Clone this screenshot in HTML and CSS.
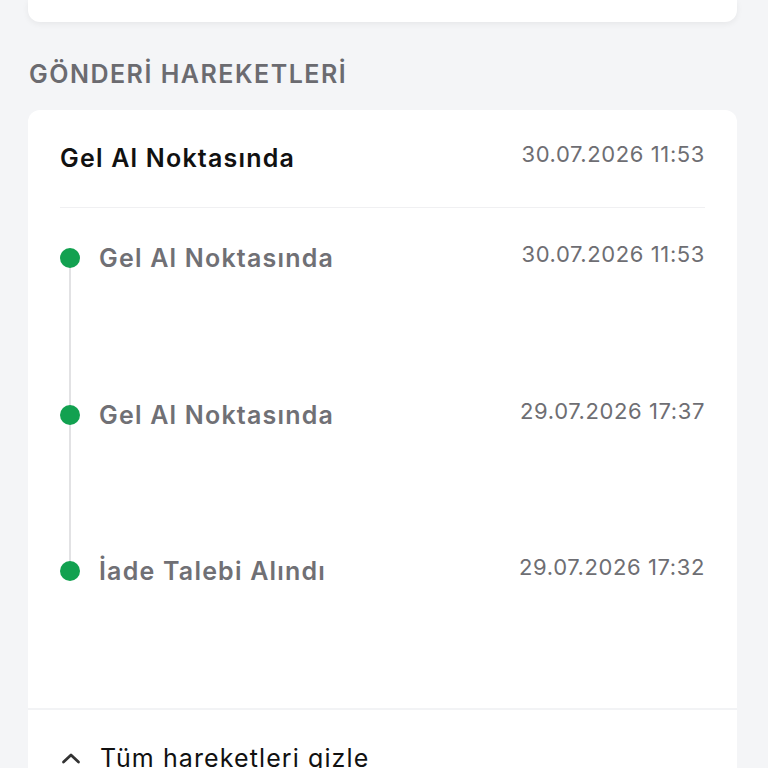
FILE: index.html
```html
<!DOCTYPE html>
<html lang="tr">
<head>
<meta charset="utf-8">
<link rel="stylesheet" href="styles.css">
</head>
<body>
<div class="page">
  <div class="card card-top"></div>
  <h2 class="section-title">GÖNDERİ HAREKETLERİ</h2>
  <div class="card card-moves">
    <div class="summary">
      <div class="summary-title">Gel Al Noktasında</div>
      <div class="date">30.07.2026 11:53</div>
    </div>
    <div class="timeline">
      <div class="item">
        <span class="dot"></span>
        <div class="item-title">Gel Al Noktasında</div>
        <div class="date">30.07.2026 11:53</div>
      </div>
      <div class="item">
        <span class="dot"></span>
        <div class="item-title">Gel Al Noktasında</div>
        <div class="date">29.07.2026 17:37</div>
      </div>
      <div class="item last">
        <span class="dot"></span>
        <div class="item-title">İade Talebi Alındı</div>
        <div class="date">29.07.2026 17:32</div>
      </div>
    </div>
    <div class="toggle">
      <svg class="chev" width="20" height="12" viewBox="0 0 20 12"><path d="M2.5 10 L10 3 L17.5 10" fill="none" stroke="#333" stroke-width="2.8" stroke-linecap="round" stroke-linejoin="round"/></svg>
      <span>Tüm hareketleri gizle</span>
    </div>
  </div>
</div>
</body>
</html>
```

FILE: styles.css
```css
* { box-sizing: border-box; }
html, body { margin: 0; padding: 0; }
body {
  background: #f4f5f7;
  font-family: Inter, "Noto Sans", sans-serif;
  width: 768px;
  height: 768px;
  overflow: hidden;
}
.page {
  padding: 0 31px 0 28px;
}
.card {
  background: #fff;
  border-radius: 12px;
}
.card-top {
  height: 22px;
  border-radius: 0 0 12px 12px;
  box-shadow: 0 2px 6px rgba(0,0,0,0.06);
}
.section-title {
  margin: 37px 0 21px 1px;
  font-size: 25px;
  line-height: 30px;
  font-weight: 600;
  color: #6b6b70;
  letter-spacing: 1.5px;
}
.card-moves {
  padding: 0;
  border-radius: 12px 12px 0 0;
}
.summary {
  display: flex;
  justify-content: space-between;
  align-items: flex-start;
  margin: 0 32px;
  padding: 32px 0 33px;
  border-bottom: 1px solid #f0f0f2;
}
.summary-title {
  font-size: 25px;
  line-height: 32px;
  font-weight: 600;
  letter-spacing: 1.2px;
  color: #111;
}
.date {
  font-size: 22px;
  line-height: 24px;
  font-weight: 400;
  letter-spacing: 0.6px;
  color: #6e6e73;
}
.timeline {
  padding: 34px 32px 121px;
  border-bottom: 2px solid #f2f3f5;
}
.item {
  position: relative;
  display: flex;
  align-items: flex-start;
  padding-bottom: 124.5px;
}
.item.last { padding-bottom: 0; }
.item::before {
  content: "";
  position: absolute;
  left: 9px;
  top: 16px;
  width: 2px;
  height: 100%;
  background: #e2e2e4;
}
.item.last::before { display: none; }
.dot {
  position: relative;
  flex: none;
  width: 20px;
  height: 20px;
  margin-top: 6px;
  border-radius: 50%;
  background: #12a150;
  z-index: 1;
}
.item-title {
  flex: 1;
  margin-left: 19px;
  font-size: 25px;
  line-height: 32px;
  font-weight: 600;
  letter-spacing: 1.2px;
  color: #707075;
}
.toggle {
  display: flex;
  align-items: center;
  gap: 19px;
  padding: 32px 32px 0 33px;
  font-size: 25px;
  line-height: 32px;
  letter-spacing: 1.1px;
  color: #111;
}
.chev { flex: none; }
```
